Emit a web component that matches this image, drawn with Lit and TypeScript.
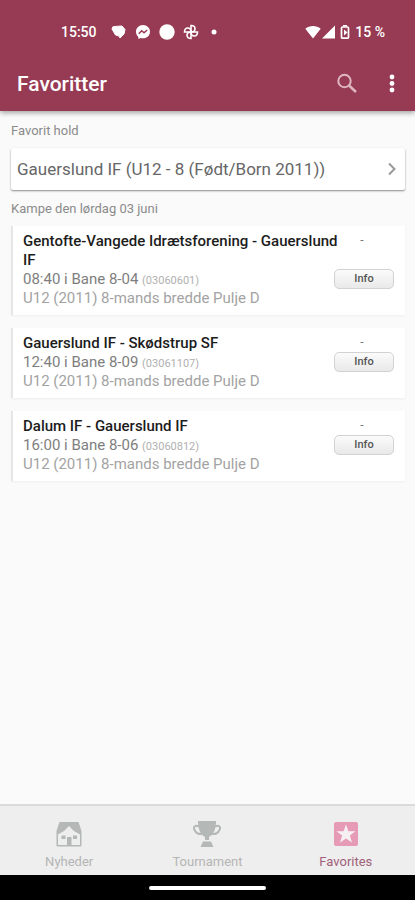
import { LitElement, html, css, svg } from "lit";
import { customElement, property } from "lit/decorators.js";

interface Match {
  teams: string;
  when: string;
  id: string;
  pool: string;
}

const POOL = "U12 (2011) 8-mands bredde Pulje D";

const MATCHES: Match[] = [
  { teams: "Gentofte-Vangede Idrætsforening - Gauerslund IF", when: "08:40 i Bane 8-04", id: "03060601", pool: POOL },
  { teams: "Gauerslund IF - Skødstrup SF", when: "12:40 i Bane 8-09", id: "03061107", pool: POOL },
  { teams: "Dalum IF - Gauerslund IF", when: "16:00 i Bane 8-06", id: "03060812", pool: POOL },
];

@customElement("status-bar")
export class StatusBar extends LitElement {
  static styles = css`
    :host {
      display: flex;
      justify-content: space-between;
      align-items: center;
      height: 16px;
      padding: 24px 30px 16px 61px;
      color: #fff;
      font: 500 14px/16px Roboto, sans-serif;
    }
    .side {
      display: flex;
      align-items: center;
    }
    .notices {
      display: flex;
      align-items: center;
      gap: 8px;
      margin-left: 14px;
    }
    .signals {
      display: flex;
      align-items: center;
      margin-right: 2px;
    }
    svg {
      display: block;
    }
  `;

  render() {
    return html`
      <div class="side">
        <time>15:50</time>
        <div class="notices">
          <svg width="16" height="16" viewBox="0 0 16 16" aria-hidden="true">
            <path d="M1 5 Q1 2 4 2.500 L11 2 L14 5.500 L13 10 L9 14 L8 12 L4.500 11 Z" fill="#fff" stroke="#fff" stroke-linejoin="round" />
          </svg>
          <svg width="16" height="16" viewBox="0 0 16 16" aria-hidden="true">
            <path d="M8 1C4 1 1 4 1 7.700c0 2 .8 3.800 2.200 5L3.500 15l2.300-1c.7.2 1.400.3 2.200.3 4 0 7-2.900 7-6.600S12 1 8 1z" fill="#fff" />
            <path d="M3.800 9.700 6.700 6.700 9 8.700 12.200 6" fill="none" stroke="#973b54" stroke-width="1.500" />
          </svg>
          <svg width="16" height="16" viewBox="0 0 16 16" aria-hidden="true">
            <circle cx="8" cy="8" r="7.700" fill="#fff" />
          </svg>
          <svg width="16" height="16" viewBox="0 0 16 16" aria-hidden="true">
            <g fill="none" stroke="#fff" stroke-width="1.600">
              <path d="M8 8V1.500c2.500 0 4 1.500 4 3.200S10.500 8 8 8z" />
              <path d="M8 8h6.500c0 2.500-1.500 4-3.200 4S8 10.500 8 8z" />
              <path d="M8 8v6.500c-2.500 0-4-1.500-4-3.200S5.500 8 8 8z" />
              <path d="M8 8H1.500c0-2.500 1.500-4 3.200-4S8 5.500 8 8z" />
            </g>
          </svg>
          <svg width="16" height="16" viewBox="0 0 16 16" aria-hidden="true">
            <circle cx="7" cy="8" r="2.500" fill="#fff" />
          </svg>
        </div>
      </div>
      <div class="side">
        <div class="signals">
          <svg width="16" height="16" viewBox="0 0 16 16" aria-hidden="true">
            <path d="M8 14.500 .3 4.800C4.500 1 11.500 1 15.700 4.800z" fill="#fff" />
          </svg>
          <svg width="16" height="16" viewBox="0 0 16 16" aria-hidden="true">
            <path d="M14 1.500V14.500H1z" fill="#fff" />
          </svg>
          <svg width="16" height="16" viewBox="0 0 16 16" aria-hidden="true">
            <path d="M6 1h4v1.500H6z" fill="#fff" />
            <rect x="4.500" y="3" width="7" height="11.200" rx="1" fill="none" stroke="#fff" stroke-width="1.700" />
            <path d="M7 5.500 10.500 8.500 7 11.500z" fill="#fff" />
          </svg>
        </div>
        <span>15 %</span>
      </div>
    `;
  }
}

@customElement("match-card")
export class MatchCard extends LitElement {
  @property({ attribute: false }) match!: Match;

  static styles = css`
    :host {
      display: block;
    }
    .card {
      display: flex;
      padding: 6px 11px 7px 10px;
      background: #fff;
      border-left: 2px solid #e6e6e6;
      box-shadow: 0 1px 2px rgba(0, 0, 0, 0.05);
      font: 400 15px/19px Roboto, sans-serif;
    }
    .details {
      flex: 1;
      min-width: 0;
      margin-right: -8px;
    }
    .teams {
      margin: 0;
      font-size: 15px;
      font-weight: 500;
      color: #1c1c1c;
    }
    .line {
      margin: 0;
      color: #7e7e7e;
    }
    .id {
      font-size: 11px;
      line-height: 11px;
      color: #b0b0b0;
    }
    .pool {
      color: #a3a3a3;
    }
    .result {
      display: flex;
      flex-direction: column;
      justify-content: space-between;
      width: 60px;
      padding-bottom: 19px;
      text-align: center;
      color: #777;
    }
    .score {
      font-size: 12px;
      line-height: 16px;
      margin-right: 4px;
    }
    .info {
      height: 20px;
      padding: 0;
      border: 1px solid #d2d2d2;
      border-radius: 5px;
      background: linear-gradient(#fbfbfb, #e9e9e9);
      color: #555;
      font: 500 11px/18px Roboto, sans-serif;
    }
  `;

  render() {
    const m = this.match;
    return html`
      <article class="card">
        <div class="details">
          <h3 class="teams">${m.teams}</h3>
          <p class="line">${m.when} <span class="id">(${m.id})</span></p>
          <p class="line pool">${m.pool}</p>
        </div>
        <div class="result">
          <span class="score">-</span>
          <button class="info" type="button">Info</button>
        </div>
      </article>
    `;
  }
}

const houseIcon = svg`
  <path d="M4.500 2h19L26.500 11v14.500a1 1 0 0 1-1 1h-23a1 1 0 0 1-1-1V11z" fill="#b4b8b7" />
  <path d="M14 6 19 11 25 14.500V25H3V14.500L9 11z" fill="#eee" />
  <path d="M12 25v-8h4.500v8zM6.500 15.500h4v3.500h-4zM18 15.500h4v3.500h-4z" fill="#b4b8b7" />
`;

const trophyIcon = svg`
  <path d="M5 1h18c0 9-3 14-7 16v3h-4v-3C8 15 5 10 5 1z" fill="#b4b8b7" />
  <path d="M6 6.500C2 4.500 0 7 1.500 10c1.500 3 4.500 4.500 8 4M22 6.500c4-2 6 .5 4.500 3.500-1.500 3-4.500 4.500-8 4" fill="none" stroke="#b4b8b7" stroke-width="2" />
  <path d="M10 21.500h8l2.500 5.500h-13z" fill="#b4b8b7" />
`;

const starIcon = svg`
  <rect x="2" y="2" width="24" height="24" rx="2" fill="#e69ab5" />
  <path d="M14 4.500 16.400 11.200H23.500L17.900 15.500 20 22.500 14 18.500 8 22.500 10.100 15.500 4.500 11.200H11.600z" fill="#f7f0f2" />
`;

const TABS = [
  { label: "Nyheder", icon: houseIcon, active: false },
  { label: "Tournament", icon: trophyIcon, active: false },
  { label: "Favorites", icon: starIcon, active: true },
];

@customElement("tab-bar")
export class TabBar extends LitElement {
  static styles = css`
    :host {
      display: block;
    }
    .tabs {
      display: grid;
      grid-template-columns: repeat(3, 1fr);
      border-top: 2px solid #dadada;
      background: #eee;
    }
    .tab {
      display: flex;
      flex-direction: column;
      align-items: center;
      gap: 6px;
      padding: 14px 0 5px;
      color: #b5b5b5;
      font: 400 13px/16px Roboto, sans-serif;
      text-decoration: none;
    }
    .active {
      color: #a0607a;
    }
    .gesture {
      display: flex;
      justify-content: center;
      align-items: center;
      height: 25px;
      background: #000;
    }
    .handle {
      width: 28%;
      height: 4px;
      border-radius: 2px;
      background: #fff;
    }
  `;

  render() {
    return html`
      <nav class="tabs">
        ${TABS.map(
          (t) => html`
            <a class="tab ${t.active ? "active" : ""}" href="#${t.label.toLowerCase()}">
              <svg width="28" height="28" viewBox="0 0 28 28" aria-hidden="true">${t.icon}</svg>
              <span>${t.label}</span>
            </a>
          `,
        )}
      </nav>
      <div class="gesture"><div class="handle"></div></div>
    `;
  }
}

@customElement("app-root")
export class AppRoot extends LitElement {
  static styles = css`
    :host {
      display: flex;
      flex-direction: column;
      min-height: 100vh;
      background: #fafafa;
      font-family: Roboto, sans-serif;
    }
    .top {
      background: #973b54;
      box-shadow: 0 2px 5px rgba(0, 0, 0, 0.35);
    }
    .bar {
      display: flex;
      align-items: center;
      height: 55px;
      padding: 0 11px 0 17px;
    }
    .title {
      flex: 1;
      margin: 0;
      color: #fff;
      font-size: 21px;
      line-height: 24px;
      font-weight: 500;
    }
    .action {
      display: flex;
      padding: 0;
      border: 0;
      background: none;
    }
    .menu {
      margin-left: 21px;
    }
    .content {
      flex: 1;
      padding: 12px 10px 16px 11px;
    }
    .label {
      margin: 0;
      color: #8b8b8b;
      font-size: 13px;
      line-height: 16px;
      font-weight: 400;
    }
    .team {
      display: flex;
      align-items: center;
      justify-content: space-between;
      margin: 9px 0 11px;
      height: 42px;
      padding: 0 6px;
      border-radius: 2px;
      background: #fff;
      box-shadow: 0 1px 2px rgba(0, 0, 0, 0.45);
      color: #666;
      font-size: 17px;
      line-height: 20px;
      text-decoration: none;
    }
    .matches {
      display: flex;
      flex-direction: column;
      gap: 13px;
      margin-top: 9px;
    }
  `;

  render() {
    return html`
      <header class="top">
        <status-bar></status-bar>
        <div class="bar">
          <h1 class="title">Favoritter</h1>
          <button class="action" type="button" aria-label="Søg">
            <svg width="24" height="24" viewBox="0 0 24 24" aria-hidden="true">
              <circle cx="9.500" cy="9" r="6.200" fill="none" stroke="#dfb6c2" stroke-width="2" />
              <path d="M14 13.500 21 20" stroke="#dfb6c2" stroke-width="2.400" />
            </svg>
          </button>
          <button class="action menu" type="button" aria-label="Menu">
            <svg width="24" height="24" viewBox="0 0 24 24" aria-hidden="true">
              <g fill="#fff">
                <circle cx="12" cy="5" r="2.400" />
                <circle cx="12" cy="11.500" r="2.400" />
                <circle cx="12" cy="18" r="2.400" />
              </g>
            </svg>
          </button>
        </div>
      </header>
      <main class="content">
        <h2 class="label">Favorit hold</h2>
        <a class="team" href="#hold">
          <span>Gauerslund IF (U12 - 8 (Født/Born 2011))</span>
          <svg width="14" height="14" viewBox="0 0 14 14" aria-hidden="true">
            <path d="M4 1.500 9.500 7 4 12.500" fill="none" stroke="#999" stroke-width="2" />
          </svg>
        </a>
        <h2 class="label">Kampe den lørdag 03 juni</h2>
        <div class="matches">
          ${MATCHES.map((m) => html`<match-card .match=${m}></match-card>`)}
        </div>
      </main>
      <tab-bar></tab-bar>
    `;
  }
}
